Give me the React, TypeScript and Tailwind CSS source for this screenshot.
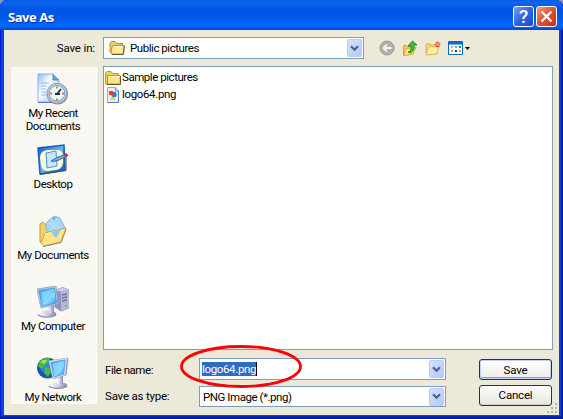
import React from "react";

function Folder({ open = false }: { open?: boolean }) {
  return open ? (
    <svg width="16" height="16" viewBox="0 0 16 16">
      <path d="M1 3.5 2.5 1.5H6L7.5 3.5H13.5V13H2.5L1 11.5Z" fill="#f6ce58" stroke="#b48824" />
      <path d="M3.5 5.5H15.2L14 14H2.8L2 12Z" fill="#ffeb94" stroke="#c39429" />
      <path d="M4 6.5H14" stroke="#fffbd8" />
      <path d="M3 14.5H14.5L15.5 6" fill="none" stroke="#75591c" />
    </svg>
  ) : (
    <svg width="16" height="16" viewBox="0 0 16 16">
      <path d="M.5 3 2 1.5H6L7.5 3.5H13.5V13.5H.5Z" fill="#f6ce58" stroke="#c09a30" />
      <path d="M2.5 5.5H15.2V14H2.5Z" fill="#ffe68a" stroke="#c39429" />
      <path d="M3 6.5H14.5" stroke="#fffbd8" />
      <path d="M1.5 14.5H15.5V6" fill="none" stroke="#75591c" />
    </svg>
  );
}

function ImageFile() {
  return (
    <svg width="16" height="16" viewBox="0 0 16 16">
      <path d="M2.5.5H10.5L13.5 4V15.5H2.5Z" fill="#e6f0ff" stroke="#8dabe1" />
      <path d="M13.5 4V15.5H3" fill="none" stroke="#5378b4" />
      <path d="M10.5.5V4H13.5" fill="#bdd5fa" stroke="#7594cf" />
      <path d="M6 11 8 8.5 11 13H5Z" fill="#f5d037" />
      <circle cx="9" cy="7.5" r="2.7" fill="#1686ef" />
      <path d="M4 4H8V8H4Z" fill="#f33b26" />
    </svg>
  );
}

function ComboButton() {
  return (
    <span className="flex h-[18px] w-[15px] shrink-0 items-center justify-center rounded-[2px] border border-[#b9ccf8] bg-gradient-to-br from-[#d5e2ff] to-[#b2c9fb]">
      <svg width="9" height="7" viewBox="0 0 9 7"><path d="M1 1.2 4.5 4.7 8 1.2" fill="none" stroke="#4d6185" strokeWidth="2.2" /></svg>
    </span>
  );
}

function RecentIcon() {
  return (
    <svg width="32" height="32" viewBox="0 0 32 32">
      <defs><linearGradient id="paper" x2="1" y2="1"><stop stopColor="#8bbcf5" /><stop offset=".4" stopColor="#fff" /><stop offset="1" stopColor="#8bb4ef" /></linearGradient></defs>
      <path d="M1 1H16L22 7V29H1Z" fill="url(#paper)" stroke="#8fb2e0" />
      <path d="M16 1V7H22" fill="#6da3ea" stroke="#517fbd" />
      <path d="M4 10H12M4 13H10M4 16H9M4 19H9M4 22H10" stroke="#8bb8ed" />
      <path d="M1 29.5H20" stroke="#4d78bd" />
      <circle cx="20.5" cy="21" r="10.6" fill="#8a90a0" />
      <circle cx="20" cy="20.3" r="10" fill="#c6cdd8" stroke="#8e9aae" />
      <circle cx="20" cy="20.3" r="7.8" fill="#e9faff" stroke="#6ba5cb" />
      <path d="M20 13.5V15.5M20 25.5V27.5M13 20.5H15M25 20.5H27" stroke="#f06732" strokeWidth="1.8" />
      <path d="m20 21 4-5M18 21h5" fill="none" stroke="#222f42" strokeWidth="1.8" />
    </svg>
  );
}

function DesktopIcon() {
  return (
    <svg width="32" height="32" viewBox="0 0 32 32">
      <defs><linearGradient id="desk" x2="1" y2="1"><stop stopColor="#1756b8" /><stop offset=".5" stopColor="#62b7f5" /><stop offset="1" stopColor="#0754aa" /></linearGradient></defs>
      <path d="m1 4 26-3 1 25-25 4Z" fill="url(#desk)" stroke="#1460b4" strokeWidth="1.5" />
      <path d="m3 30.500 26-4V9" fill="none" stroke="#424c5a" />
      <path d="M10 6h10q6 0 6 6v7q-1 6-7 7l-8 1q-6 0-7-6l-1-7q0-7 7-8Z" fill="#fff8d9" />
      <path d="m9 9 10-2 1 15-10 2Z" fill="#c5e6ff" stroke="#4095dd" />
      <path d="m14 17 6-3.500 8-3 1 2-8 4-5 1Z" fill="#6fb2e2" stroke="#23558e" strokeWidth=".8" />
      <path d="m26.500 10.500 3-1 2 2-3 2Z" fill="#ce302f" />
    </svg>
  );
}

function DocumentsIcon() {
  return (
    <svg width="32" height="32" viewBox="0 0 32 32">
      <path d="m3 9 3-2 3 3v2l15 0 1 6-18 12-4-3Z" fill="#f7cf60" stroke="#c59d42" />
      <path d="m9 8 8-7 6 2 5 10-7 8-12-6Z" fill="#a6d6ff" stroke="#83b6e6" />
      <path d="m12 8 9 8M15 6l8 8m-1-7-9 7M25 10l-8 7" stroke="#c3e4ff" strokeWidth=".8" />
      <circle cx="17" cy="3.500" r="1" fill="#3e88d4" />
      <path d="m8 18 21-5-5 14-17 4-3-3Z" fill="#ffe28a" stroke="#cba548" />
      <path d="m8 19 18-4" stroke="#fff6bc" />
      <path d="m14 17 10-2-5 8Z" fill="#85c8ff" />
      <path d="m6 31.500 18-4 5-13" fill="none" stroke="#a18645" />
    </svg>
  );
}

function ScreenGradients() {
  return (
    <defs>
      <linearGradient id="screen" x2="1" y2="1"><stop stopColor="#249bec" /><stop offset=".6" stopColor="#88ddff" /><stop offset="1" stopColor="#2e91e7" /></linearGradient>
      <linearGradient id="metal" x2="1"><stop stopColor="#fff" /><stop offset=".5" stopColor="#d0d1e6" /><stop offset="1" stopColor="#8487b2" /></linearGradient>
    </defs>
  );
}

function ComputerIcon() {
  return (
    <svg width="32" height="32" viewBox="0 0 32 32">
      <ScreenGradients />
      <path d="m18 4 8-2.500 6 2.500v18l-8 3-6-4Z" fill="#8f93bf" stroke="#8388b6" strokeWidth=".8" />
      <path d="m18 4 8-2.500 6 2.500-8 2Z" fill="#c9cce4" />
      <path d="m24 6 8-2v18l-8 3Z" fill="#b4b8d8" />
      <path d="m25 9 5-1M25 12l5-1M25 15l5-1" stroke="#6c73a4" strokeWidth="1.3" />
      <path d="M28 19h2v2h-2z" fill="#42db28" />
      <ellipse cx="10" cy="28.500" rx="9.500" ry="3.200" fill="#8c8fb5" />
      <ellipse cx="10" cy="27.500" rx="9" ry="3" fill="url(#metal)" />
      <path d="m10 20 7-1v7q-2 3-5 1Z" fill="url(#metal)" />
      <path d="m0 3 19-3 2 18-17 4Z" fill="#c3cde4" stroke="#8f9abb" strokeWidth=".8" />
      <path d="m2 4.500 15.500-2.500 2 15-14.500 3Z" fill="url(#screen)" stroke="#2a8fd8" strokeWidth=".7" />
      <path d="m4 6 11-2-8 11Z" fill="#a7dffc" opacity=".5" />
    </svg>
  );
}

function NetworkIcon() {
  return (
    <svg width="32" height="32" viewBox="0 0 32 32">
      <circle cx="10.500" cy="11" r="10.500" fill="#1458b4" />
      <circle cx="9" cy="9" r="6.500" fill="#2b86dd" />
      <path d="m3 4 5-3 5 0-1 4-3 1-2 4-4 1-2-2Zm5 6 4 1 2 4-3 5-4-4Z" fill="#4bbb31" />
      <path d="m3 5 3-2 4 0-2 4Z" fill="#9ae15f" />
      <ellipse cx="21" cy="29" rx="9.500" ry="3" fill="#8c8fb5" />
      <ellipse cx="21" cy="28" rx="9" ry="2.700" fill="url(#metal)" />
      <path d="m20 20 6-2v9q-3 2-6 0Z" fill="url(#metal)" />
      <path d="m12 4 18.500-3 .5 2-2 15-13 4Z" fill="#9fa9cb" stroke="#8f9abb" strokeWidth=".8" />
      <path d="m12 4 18-3-2 17-12 4Z" fill="#d5dcec" />
      <path d="m14 5.500 14-2.500-1.500 14-9.500 3Z" fill="url(#screen)" stroke="#2a8fd8" strokeWidth=".7" />
      <path d="m15 6.500 11-2-8 11Z" fill="#a7dffc" opacity=".5" />
    </svg>
  );
}

const places = [
  { lines: ["My Recent", "Documents"], icon: <RecentIcon /> },
  { lines: ["Desktop"], icon: <DesktopIcon /> },
  { lines: ["My Documents"], icon: <DocumentsIcon /> },
  { lines: ["My Computer"], icon: <ComputerIcon /> },
  { lines: ["My Network"], icon: <NetworkIcon /> },
];

function Toolbar() {
  return (
    <div className="ml-[15px] flex items-center gap-[7px]">
      <svg width="16" height="16" viewBox="0 0 16 16">
        <circle cx="8" cy="8" r="7" fill="#b1b0ac" stroke="#9c9c97" />
        <path d="M12.500 8H4.500m3.500-3.500L4.500 8l3.500 3.500" fill="none" stroke="#f4f3ee" strokeWidth="1.800" />
      </svg>
      <svg width="16" height="16" viewBox="0 0 16 16">
        <path d="M1.500 5.500h3l1 1h6V14l-10 1.500Z" fill="#f1c858" stroke="#cfa63e" />
        <path d="m4 8.500 10-1-3 6.500-9 1.500Z" fill="#ffe889" stroke="#d6b044" />
        <path d="M6 12q4-1 3-6H6l4.500-5L15 5h-3q1 6-4 8Z" fill="#42bd32" stroke="#16781b" strokeWidth=".8" />
      </svg>
      <svg width="16" height="16" viewBox="0 0 16 16">
        <path d="M1 4h4l1 1h6v9H1Z" fill="#f8d77c" stroke="#e0b653" />
        <path d="m3.500 7 10.500-1-2 8-11 1Z" fill="#ffeda0" stroke="#dfb952" />
        <path d="M12.500 1.500v6M9.500 4.500h6M10.500 2.500l4 4m0-4-4 4" stroke="#ef5430" strokeWidth="1.200" />
        <circle cx="12.500" cy="4.500" r="1.300" fill="#ffb070" />
      </svg>
      <svg width="23" height="14" viewBox="0 0 23 14">
        <path d="M.5.5h14v13H.5Z" fill="#fff" stroke="#0869ca" />
        <path d="M1 2h13" stroke="#0869ca" strokeWidth="3" />
        <path d="M3 5h2v2H3z" fill="#a8b3d4" /><path d="M7 5h2v2H7z" fill="#7a9adf" /><path d="M11 5h2v2h-2z" fill="#279628" />
        <path d="M3 9h2v2H3z" fill="#ed8d6d" /><path d="M7 9h2v2H7z" fill="#233da6" /><path d="M11 9h2v2h-2z" fill="#d9a82b" />
        <path d="M17 6h5l-2.500 3Z" fill="#000" />
      </svg>
    </div>
  );
}

export default function App() {
  return (
    <main className="relative h-[419px] w-[563px] overflow-hidden bg-[#8a98c1] font-['Roboto','Liberation_Sans',sans-serif] text-[11.5px] leading-[13px] tracking-[-0.45px] text-black">
      <div className="flex h-full flex-col overflow-hidden rounded-t-[7px] bg-[#0842e0] shadow-[inset_-1px_-1px_#001a8c,inset_1px_0_#0019cf,inset_-2px_-3px_#0526b0]">
        <header className="flex h-[30px] shrink-0 items-center justify-between bg-[linear-gradient(180deg,#0759df_0%,#0f66ee_7%,#0561ec_16%,#0054e3_30%,#0058e8_60%,#006aff_87%,#0043cf_100%)] pr-[6px] pl-[8px]">
          <h1 className="pt-[3px] font-['Open_Sans',sans-serif] text-[13px] leading-[18px] font-bold tracking-[-0.45px] text-white [text-shadow:1px_1px_#0831a3]">Save As</h1>
          <div className="flex gap-[2px] pt-[3px]">
            <button className="flex size-[21px] items-center justify-center rounded-[3px] border border-white bg-gradient-to-br from-[#799cf3] via-[#2c65e2] to-[#1c4acd] text-[19px] leading-[18px] font-medium tracking-normal text-white">?</button>
            <button className="flex size-[21px] items-center justify-center rounded-[3px] border border-white bg-gradient-to-br from-[#f19b7c] via-[#df5030] to-[#bd330e]">
              <svg width="13" height="13" viewBox="0 0 13 13"><path d="m1.500 1.500 10 10m0-10-10 10" stroke="#fff" strokeWidth="2.400" /></svg>
            </button>
          </div>
        </header>

        <section className="mr-[4px] mb-[4px] ml-[4px] min-h-0 flex-1 bg-[#ece9d8]">
          <div className="flex h-[36px] items-start pt-[7px]">
            <label className="w-[99px] pt-[5px] pr-[8px] text-right tracking-[-0.15px]">Save in:</label>
            <div className="flex h-[22px] w-[261px] items-center border border-[#7f9db9] bg-white pr-px pl-[5px]">
              <Folder open />
              <span className="flex-1 pl-[5px]">Public pictures</span>
              <ComboButton />
            </div>
            <div className="pt-[3px]"><Toolbar /></div>
          </div>

          <div className="flex h-[348px]">
            <nav className="mt-px ml-[7px] flex h-[337px] w-[86px] shrink-0 flex-col overflow-hidden border-r border-b border-white bg-[#f9f8f3] pt-[6px] text-center">
              {places.map((place) => (
                <div key={place.lines[0]} className="flex h-[71px] shrink-0 flex-col items-center pr-px">
                  <div className="h-[34px]">{place.icon}</div>
                  {place.lines.map((line) => <span key={line}>{line}</span>)}
                </div>
              ))}
            </nav>

            <div className="ml-[6px] w-[450px]">
              <div className="h-[284px] border border-[#7f9db9] bg-white pt-[2px] pl-px">
                <div className="flex h-[17px] items-center gap-px"><Folder /><span>Sample pictures</span></div>
                <div className="flex h-[17px] items-center gap-px"><ImageFile /><span className="tracking-[-0.35px]">logo64.png</span></div>
              </div>
              <div className="mt-[8px] flex">
                <div className="flex w-[96px] shrink-0 flex-col pl-[2px]">
                  <label className="pt-[6px]">File name:</label>
                  <label className="pt-[13px] tracking-[-0.2px]">Save as type:</label>
                </div>
                <div className="flex w-[247px] shrink-0 flex-col gap-[6px]">
                  <div className="flex h-[22px] items-center justify-between border border-[#7f9db9] bg-white pr-px pl-[2px]">
                    <span className="h-[14px] border-r border-black bg-[#316ac5] pt-px tracking-[-0.35px] text-white">logo64.png</span><ComboButton />
                  </div>
                  <div className="flex h-[21px] items-center justify-between border border-[#7f9db9] bg-white pr-px pl-[3px]">
                    <span className="pt-px">PNG Image (*.png)</span><ComboButton />
                  </div>
                </div>
                <div className="ml-[33px] flex w-[73px] shrink-0 flex-col gap-[5px] pt-px tracking-[-0.2px]">
                  <button className="h-[21px] rounded-[3px] border border-[#003c74] bg-gradient-to-b from-white to-[#eeece5] pt-px shadow-[inset_0_0_0_1px_#bdd1fb,inset_0_-2px_#829de4]">Save</button>
                  <button className="h-[21px] rounded-[3px] border border-[#003c74] bg-gradient-to-b from-white to-[#e9e5db] shadow-[inset_0_-1px_#d6d0c5]">Cancel</button>
                </div>
              </div>
            </div>
          </div>
        </section>
      </div>
      <svg className="pointer-events-none absolute top-[343px] left-[178px]" width="126" height="47" viewBox="0 0 126 47">
        <ellipse cx="63" cy="23.500" rx="59.500" ry="20" fill="none" stroke="#ff0000" strokeWidth="2.800" />
      </svg>
      <svg className="pointer-events-none absolute right-[5px] bottom-[5px]" width="12" height="12" viewBox="0 0 12 12">
        <path d="M9 1h2v2H9zM5 5h2v2H5zM9 5h2v2H9zM1 9h2v2H1zM5 9h2v2H5zM9 9h2v2H9z" fill="#b8b4a3" />
      </svg>
    </main>
  );
}
